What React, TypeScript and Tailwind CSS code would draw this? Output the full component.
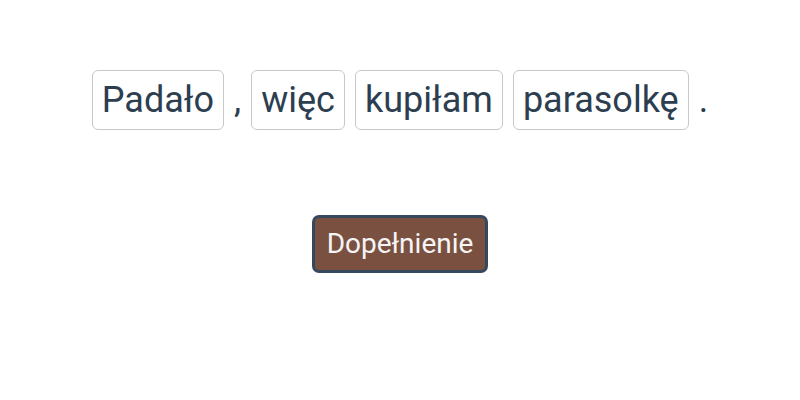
const tokens = [
  { text: "Padało", boxed: true },
  { text: ",", boxed: false },
  { text: "więc", boxed: true },
  { text: "kupiłam", boxed: true },
  { text: "parasolkę", boxed: true },
  { text: ".", boxed: false },
];

export default function App() {
  return (
    <div className="min-h-[400px] w-[800px] bg-white font-['Roboto',sans-serif] text-[#2c3e50] flex flex-col items-center pt-[70px]">
      <div className="flex items-center justify-center">
        {tokens.map((t, i) =>
          t.boxed ? (
            <span
              key={i}
              className="mx-[5px] px-[9px] py-[8px] border border-[#c8c8c8] rounded-[6px] text-[36px] leading-[42px]"
            >
              {t.text}
            </span>
          ) : (
            <span key={i} className="mx-[5px] text-[36px] leading-[42px]">
              {t.text}
            </span>
          )
        )}
      </div>
      <button className="mt-[85px] px-[12px] py-[10px] bg-[#7a5141] border-[3px] border-[#34495e] rounded-[7px] text-[28px] leading-[32px] text-[#f5f5f5]">
        Dopełnienie
      </button>
    </div>
  );
}
